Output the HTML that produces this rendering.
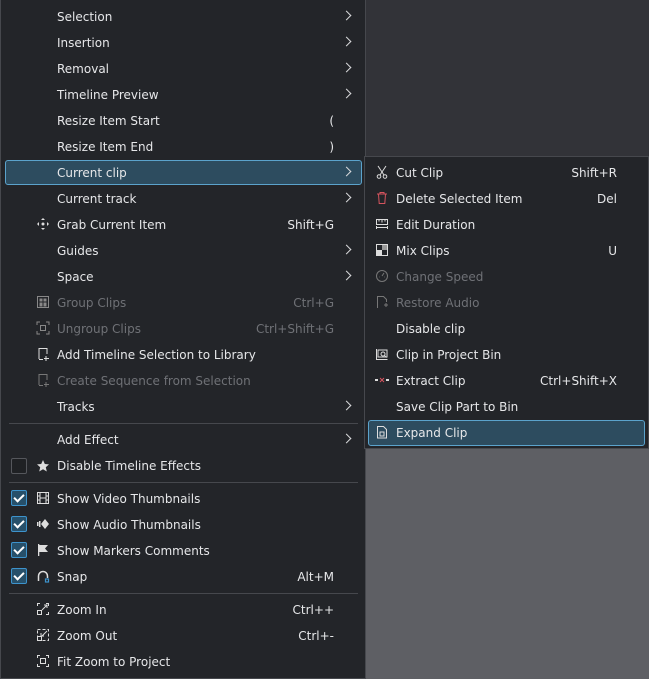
<!DOCTYPE html>
<html><head><meta charset="utf-8"><style>
*{margin:0;padding:0;box-sizing:border-box}
body{width:649px;height:679px;background:#323338;position:relative;overflow:hidden;font-family:"DejaVu Sans","Liberation Sans",sans-serif;font-size:12px;color:#e6e7e9}
.gray{position:absolute;left:366px;top:448px;width:283px;height:231px;background:#5e5f64}
.menu{position:absolute;background:#232529;border:1px solid #46484d}
.r{position:absolute;height:26px;line-height:26px;white-space:nowrap}
.dis{color:#6f7176}
.arr{position:absolute;width:7px;height:7px;border-right:1.3px solid #d8d9db;border-top:1.3px solid #d8d9db;transform:rotate(45deg)}
.sep{position:absolute;left:9px;width:349px;height:1px;background:#46484d}
.hl{position:absolute;background:#2d4c5f;border:1px solid #5ba3cc;border-radius:3px}
.cb{position:absolute;left:11px;width:16px;height:16px;border:1px solid #55575c;border-radius:2px;background:#1f2124}
.cb.on{background:#27506a;border-color:#3d93cc}
.cb.on:after{content:"";position:absolute;left:4px;top:1px;width:4px;height:8px;border-right:2px solid #fff;border-bottom:2px solid #fff;transform:rotate(45deg)}
svg.i{position:absolute;width:14px;height:14px}
</style></head><body>
<div class="gray"></div>
<div class="menu" style="left:0;top:0;width:366px;height:679px;border-top:none"></div>
<div class="hl" style="left:5px;top:160px;width:357px;height:25px"></div>
<div class="menu" style="left:364px;top:156px;width:285px;height:293px"></div>
<div class="hl" style="left:368px;top:420px;width:277px;height:26px"></div>
<div id="m"></div>
<div class="sep" style="top:423px"></div>
<div class="sep" style="top:482px"></div>
<div class="sep" style="top:593px"></div>
<div class="cb" style="top:458px"></div>
<div class="cb on" style="top:490px"></div>
<div class="cb on" style="top:516px"></div>
<div class="cb on" style="top:542px"></div>
<div class="cb on" style="top:568px"></div>

<svg class="i" style="left:36px;top:217px" viewBox="0 0 14 14" fill="#ddd"><circle cx="7" cy="7" r="1.5"/><path d="M7 1l2 2H5zM7 13l2-2H5zM1 7l2-2v4zM13 7l-2-2v4z"/></svg>
<svg class="i" style="left:36px;top:295px" viewBox="0 0 14 14" fill="none" stroke="#888"><rect x="1.5" y="1.5" width="11" height="11"/><rect x="4" y="4" width="2" height="2" fill="#888"/><rect x="8" y="4" width="2" height="2" fill="#888"/><rect x="4" y="8" width="2" height="3" fill="#888"/><rect x="8" y="8" width="2" height="3" fill="#888"/></svg>
<svg class="i" style="left:36px;top:321px" viewBox="0 0 14 14" fill="none" stroke="#888"><path d="M1 4V1h3M10 1h3v3M13 10v3h-3M4 13H1v-3"/><rect x="4.5" y="4.5" width="5" height="5"/></svg>
<svg class="i" style="left:36px;top:347px" viewBox="0 0 14 14" fill="none" stroke="#ddd"><path d="M3 12V1.5h8V7M3 12.5h4M10 9v5M8 11.5h5"/></svg>
<svg class="i" style="left:36px;top:373px" viewBox="0 0 14 14" fill="none" stroke="#777"><path d="M3 12V1.5h8V7M3 12.5h4M10 9v5M8 11.5h5"/></svg>
<svg class="i" style="left:36px;top:459px" viewBox="0 0 14 14" fill="#ddd"><path d="M7 1l1.8 4 4.2.4-3.2 2.8 1 4.3L7 10.3 3.2 12.5l1-4.3L1 5.4l4.2-.4z"/></svg>
<svg class="i" style="left:36px;top:491px" viewBox="0 0 14 14" fill="none" stroke="#ddd"><rect x="1.5" y="1.5" width="11" height="11"/><path d="M4 1.5v11M10 1.5v11M1.5 5h2.5M1.5 9h2.5M10 5h2.5M10 9h2.5M4 7h6"/></svg>
<svg class="i" style="left:36px;top:517px" viewBox="0 0 14 14" fill="#ddd"><path d="M9 2l4 5-4 5-4-5z"/><rect x="1" y="5" width="1.5" height="4"/><rect x="3" y="4" width="1.5" height="6"/></svg>
<svg class="i" style="left:36px;top:543px" viewBox="0 0 14 14" fill="#ddd"><path d="M2 1h1.3v12H2zM3.3 2H12l-3 3.5L12 9H3.3z"/></svg>
<svg class="i" style="left:36px;top:569px" viewBox="0 0 14 14" fill="none" stroke="#ddd" stroke-width="1.5"><path d="M2.5 12V7a4.5 4.5 0 0 1 9 0v2"/><rect x="9.5" y="10" width="3" height="3" stroke="#3d93cc" stroke-width="1.2"/></svg>
<svg class="i" style="left:36px;top:602px" viewBox="0 0 14 14" fill="none" stroke="#ddd"><path d="M1.5 4V1.5H4M10 1.5h2.5V4M12.5 10v2.5H10M4 12.5H1.5V10M6 8l5-5M8 3h3v3"/><rect x="1.5" y="8.5" width="4" height="4"/></svg>
<svg class="i" style="left:36px;top:628px" viewBox="0 0 14 14" fill="none" stroke="#ddd"><rect x="1.5" y="1.5" width="11" height="11" stroke-dasharray="3 2"/><path d="M11 3L6 8M5 5v3h3"/><rect x="1.5" y="8.5" width="4" height="4"/></svg>
<svg class="i" style="left:36px;top:654px" viewBox="0 0 14 14" fill="none" stroke="#ddd"><path d="M1.5 4V1.5H4M10 1.5h2.5V4M12.5 10v2.5H10M4 12.5H1.5V10"/><rect x="4.5" y="4.5" width="5" height="5"/></svg>
<svg class="i" style="left:375px;top:165px" viewBox="0 0 14 14" fill="none" stroke="#ddd"><path d="M3 1l6 9M11 1L5 10"/><circle cx="4" cy="11.5" r="1.8"/><circle cx="10" cy="11.5" r="1.8"/></svg>
<svg class="i" style="left:375px;top:191px" viewBox="0 0 14 14" fill="none" stroke="#d5545e"><path d="M2 3h10M5 3V1.5h4V3M3.5 3l.7 9.5h5.6l.7-9.5"/></svg>
<svg class="i" style="left:375px;top:217px" viewBox="0 0 14 14" fill="none" stroke="#ddd"><rect x="1.5" y="2.5" width="11" height="5"/><path d="M4 2.5v2M7 2.5v3M10 2.5v2M2 10.5h10M1.5 12v-3M12.5 12v-3"/></svg>
<svg class="i" style="left:375px;top:243px" viewBox="0 0 14 14"><rect x="1.5" y="1.5" width="11" height="11" fill="none" stroke="#ddd"/><rect x="2" y="7" width="5" height="5" fill="#ddd"/><rect x="7" y="2" width="5" height="5" fill="#999"/></svg>
<svg class="i" style="left:375px;top:269px" viewBox="0 0 14 14" fill="none" stroke="#777"><circle cx="7" cy="7" r="5.5"/><path d="M7 7l2-3M4 8h.5M9.5 8h.5"/></svg>
<svg class="i" style="left:375px;top:295px" viewBox="0 0 14 14" fill="none" stroke="#777"><path d="M2.5 13V1.5h6l3 3V7M9 10h4M11 8v4"/></svg>
<svg class="i" style="left:375px;top:347px" viewBox="0 0 14 14" fill="none" stroke="#ddd"><path d="M1.5 2v10.5h11M3 3h9v7H3z"/><circle cx="8" cy="7" r="2"/><path d="M9.5 8.5l2 2"/></svg>
<svg class="i" style="left:375px;top:373px" viewBox="0 0 14 14"><rect x="0" y="6" width="3" height="2" fill="#ddd"/><rect x="11" y="6" width="3" height="2" fill="#ddd"/><path d="M5 5l4 4M9 5l-4 4" stroke="#d5545e"/></svg>
<svg class="i" style="left:375px;top:425px" viewBox="0 0 14 14" fill="none" stroke="#ddd"><path d="M2.5 13V1.5h6l3 3V13z"/><rect x="5" y="7" width="4" height="4"/></svg>

<script>
var L=[["Selection","",1],["Insertion","",1],["Removal","",1],["Timeline Preview","",1],["Resize Item Start","(",0],["Resize Item End",")",0],["Current clip","",1],["Current track","",1],["Grab Current Item","Shift+G",0],["Guides","",1],["Space","",1],["Group Clips","Ctrl+G",0,1],["Ungroup Clips","Ctrl+Shift+G",0,1],["Add Timeline Selection to Library","",0],["Create Sequence from Selection","",0,1],["Tracks","",1]];
var L2=[[439,"Add Effect","",1],[465,"Disable Timeline Effects",""],[498,"Show Video Thumbnails",""],[524,"Show Audio Thumbnails",""],[550,"Show Markers Comments",""],[576,"Snap","Alt+M"],[609,"Zoom In","Ctrl++"],[635,"Zoom Out","Ctrl+-"],[661,"Fit Zoom to Project",""]];
var S=[["Cut Clip","Shift+R"],["Delete Selected Item","Del"],["Edit Duration",""],["Mix Clips","U"],["Change Speed","",1],["Restore Audio","",1],["Disable clip",""],["Clip in Project Bin",""],["Extract Clip","Ctrl+Shift+X"],["Save Clip Part to Bin",""],["Expand Clip",""]];
var h="";
function row(cy,x,t,sc,scR,arr,arrX,dis){
 var c=dis?" dis":"";
 h+='<div class="r'+c+'" style="left:'+x+'px;top:'+(cy-12)+'px">'+t+'</div>';
 if(sc)h+='<div class="r'+c+'" style="right:'+(649-scR-1)+'px;top:'+(cy-12)+'px">'+sc+'</div>';
 if(arr)h+='<div class="arr" style="left:'+arrX+'px;top:'+(cy-4)+'px"></div>';
}
L.forEach(function(a,i){row(16+26*i,57,a[0],a[1],333,a[2],343,a[3]);});
L2.forEach(function(a){row(a[0],57,a[1],a[2],333,a[3],343,0);});
S.forEach(function(a,i){row(172+26*i,396,a[0],a[1],616,0,0,a[2]);});
document.getElementById("m").innerHTML=h;
</script>
</body></html>
